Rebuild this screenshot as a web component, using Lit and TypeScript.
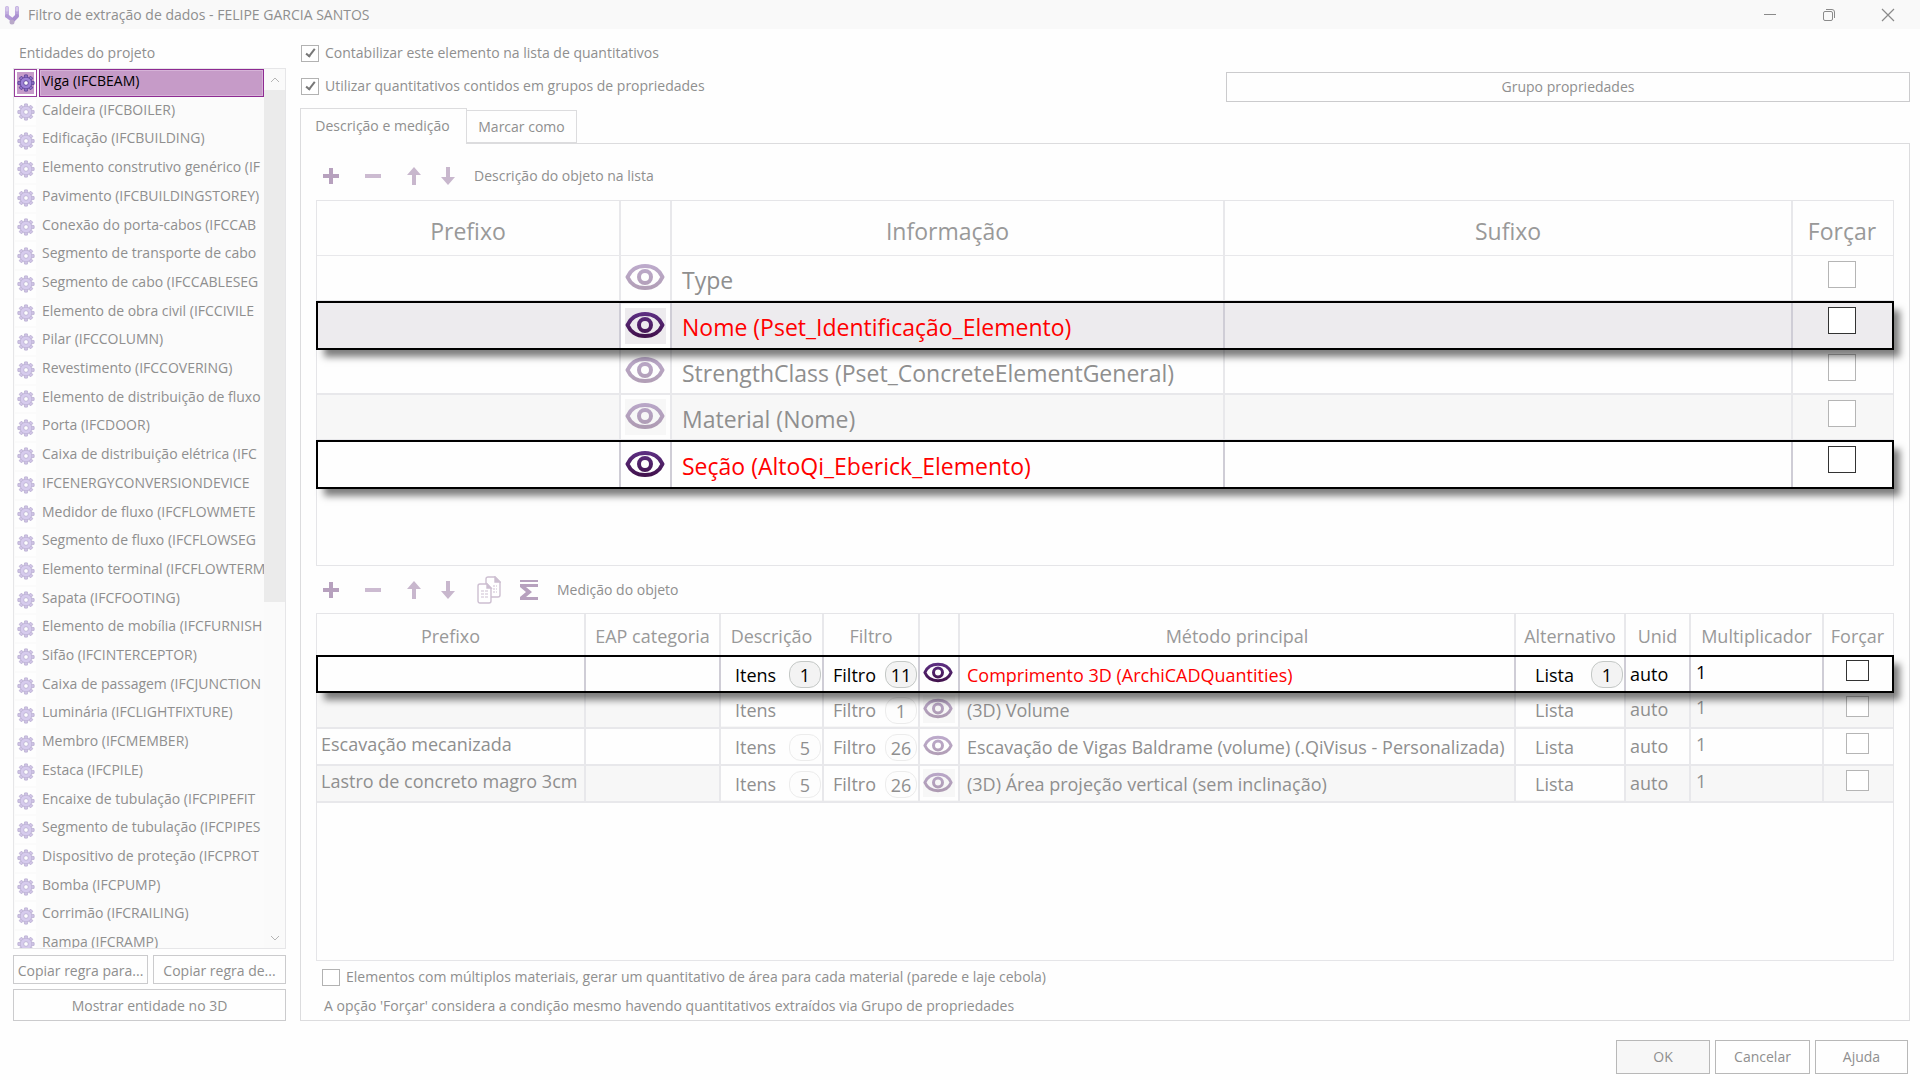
import { LitElement, html, svg, css, nothing } from "lit";
import { customElement, state } from "lit/decorators.js";
import { classMap } from "lit/directives/class-map.js";

const ENTITIES = [
  "Viga (IFCBEAM)",
  "Caldeira (IFCBOILER)",
  "Edificação (IFCBUILDING)",
  "Elemento construtivo genérico (IF",
  "Pavimento (IFCBUILDINGSTOREY)",
  "Conexão do porta-cabos (IFCCAB",
  "Segmento de transporte de cabo",
  "Segmento de cabo (IFCCABLESEG",
  "Elemento de obra civil (IFCCIVILE",
  "Pilar (IFCCOLUMN)",
  "Revestimento (IFCCOVERING)",
  "Elemento de distribuição de fluxo",
  "Porta (IFCDOOR)",
  "Caixa de distribuição elétrica (IFC",
  "IFCENERGYCONVERSIONDEVICE",
  "Medidor de fluxo (IFCFLOWMETE",
  "Segmento de fluxo (IFCFLOWSEG",
  "Elemento terminal (IFCFLOWTERM",
  "Sapata (IFCFOOTING)",
  "Elemento de mobília (IFCFURNISH",
  "Sifão (IFCINTERCEPTOR)",
  "Caixa de passagem (IFCJUNCTION",
  "Luminária (IFCLIGHTFIXTURE)",
  "Membro (IFCMEMBER)",
  "Estaca (IFCPILE)",
  "Encaixe de tubulação (IFCPIPEFIT",
  "Segmento de tubulação (IFCPIPES",
  "Dispositivo de proteção (IFCPROT",
  "Bomba (IFCPUMP)",
  "Corrimão (IFCRAILING)",
  "Rampa (IFCRAMP)",
];

interface DescriptionRow { info: string; marked?: boolean }
const DESCRIPTIONS: DescriptionRow[] = [
  { info: "Type" },
  { info: "Nome (Pset_Identificação_Elemento)", marked: true },
  { info: "StrengthClass (Pset_ConcreteElementGeneral)" },
  { info: "Material (Nome)" },
  { info: "Seção (AltoQi_Eberick_Elemento)", marked: true },
];

interface MeasureRow {
  prefix: string; items?: number; filters: number; method: string; alternatives?: number; marked?: boolean;
}
const MEASURES: MeasureRow[] = [
  { prefix: "", items: 1, filters: 11, method: "Comprimento 3D (ArchiCADQuantities)", alternatives: 1, marked: true },
  { prefix: "", filters: 1, method: "(3D) Volume" },
  { prefix: "Escavação mecanizada", items: 5, filters: 26, method: "Escavação de Vigas Baldrame (volume) (.QiVisus - Personalizada)" },
  { prefix: "Lastro de concreto magro 3cm", items: 5, filters: 26, method: "(3D) Área projeção vertical (sem inclinação)" },
];

const gear = html`<svg class="gear" viewBox="0 0 20 20" aria-hidden="true">
  ${[0, 45, 90, 135, 180, 225, 270, 315].map((a) => svg`<path transform="rotate(${a} 10 10)" d="M7.9 4.500 8.500 1h3l.6 3.500z" fill="#8f6fc6" stroke="#5f4598" stroke-width="1"/>`)}
  <circle cx="10" cy="10" r="6.400" fill="#9c80d6" stroke="#5f4598" stroke-width="0.800"/>
  <circle cx="10" cy="10" r="2.600" fill="#fff" stroke="#5f4598" stroke-width="1"/>
</svg>`;

const eye = html`<svg class="eye" viewBox="0 0 40 28" fill="none" stroke="url(#g)" aria-hidden="true">
  <defs><linearGradient id="g" gradientUnits="userSpaceOnUse" x1="0" y1="0" x2="0" y2="28"><stop offset="0" stop-color="#5f3186"/><stop offset="1" stop-color="#3f0f48"/></linearGradient></defs>
  <path stroke-width="4" stroke-linejoin="round" d="M20 3C29 3 35 8 37.500 14 35 20 29 25 20 25S5 20 2.500 14C5 8 11 3 20 3z"/>
  <circle cx="20" cy="14" r="6" stroke-width="4"/>
</svg>`;

const icons = {
  plus: html`<svg width="16" height="16" viewBox="0 0 16 16"><path d="M6 0h4v6h6v4h-6v6H6v-6H0V6h6z" fill="#b7a1be"/></svg>`,
  minus: html`<svg width="16" height="16" viewBox="0 0 16 16"><path d="M0 6h16v4H0z" fill="#ccbbd1"/></svg>`,
  up: html`<svg width="16" height="18" viewBox="0 0 16 18"><path d="M8 0l7 8h-5v10H6V8H1z" fill="#c8b7cd"/></svg>`,
  down: html`<svg width="16" height="18" viewBox="0 0 16 18"><path d="M8 18l7-8h-5V0H6v10H1z" fill="#c8b7cd"/></svg>`,
  copy: html`<svg width="24" height="28" viewBox="0 0 24 28" fill="#fff" stroke="#cdbfd1" stroke-width="1.400">
    <path d="M11 1h7l5 5v13a2 2 0 0 1-2 2H11a2 2 0 0 1-2-2V3a2 2 0 0 1 2-2z"/><path d="M18 1v5h5z" fill="#cdbfd1"/>
    <path d="M16 10h4M16 13h4M16 16h4" stroke-width="1" stroke-dasharray="2 1"/>
    <path d="M3 8h7l4 4v13a2 2 0 0 1-2 2H3a2 2 0 0 1-2-2V10a2 2 0 0 1 2-2z"/><path d="M10 8v4h4z" fill="#cdbfd1"/>
    <path d="M4 15h7M4 18h8M4 21h7" stroke-width="1" stroke-dasharray="3 1"/></svg>`,
  sum: html`<svg width="20" height="20" viewBox="0 0 20 20" fill="#b7a1be"><path d="M1 0h18v2H1zM1 4h18v3H7l6 5-6 5h12v3H1v-3l6-5-6-5z"/></svg>`,
};

@customElement("app-root")
export class AppRoot extends LitElement {
  @state() private selected = 0;

  static styles = css`
    :host {
      display: flex; flex-direction: column; min-height: 100vh; box-sizing: border-box;
      background: #fefefe; color: #8f8f8f;
      font-family: "Open Sans", "Noto Sans", sans-serif; font-size: 14px; line-height: 20px;
    }
    *, *::before, *::after { box-sizing: border-box; }
    button { font: inherit; color: inherit; padding: 0; margin: 0; background: none; border: 0; white-space: nowrap; }
    svg { display: block; flex: none; }
    h1, h2, p, ul { margin: 0; padding: 0; font: inherit; list-style: none; }
    .titlebar { display: flex; align-items: center; height: 29px; padding: 0 24px 0 4px; background: #f9f9f9; }
    .titlebar h1 { flex: 1; padding-left: 8px; }
    .window-actions { display: flex; gap: 43px; }
    .window-actions button { width: 16px; height: 16px; }
    .body { flex: 1; display: grid; grid-template-columns: 273px minmax(0, 1fr); column-gap: 14px; padding: 14px 10px 19px 13px; }
    .sidebar { display: flex; flex-direction: column; min-height: 0; }
    .sidebar h2 { padding-left: 6px; margin-bottom: 5px; }
    .listbox { flex: 1; min-height: 0; display: flex; border: 1px solid #e6e6e8; overflow: hidden; }
    .entities { flex: 1; min-width: 0; display: flex; flex-direction: column; margin-bottom: -11px; background: #fbfbfb; }
    .entities li { flex: 1 1 0; display: flex; }
    .entity { flex: 1; min-width: 0; display: flex; align-items: stretch; gap: 2px; text-align: left; }
    .entity .icon { width: 23px; display: grid; place-items: center; border: 1px solid #fbfbfb; background: #fefefe; }
    .entity .name { flex: 1; min-width: 0; overflow: hidden; padding: 1px 0 0 3px; line-height: 22px; }
    .gear { width: 18px; height: 18px; opacity: 0.4; }
    .entity.selected { padding-bottom: 1px; }
    .entity.selected .gear { opacity: 1; }
    .entity.selected .icon { border-color: #973d9b; background: #c69bca; box-shadow: inset 0 0 0 2px #fff; }
    .entity.selected .name { padding: 0 0 0 2px; border: 1px solid #8e2a92; box-shadow: inset 0 0 0 1px #d6b3d8; background: #c69bc8; color: #000; }
    .scrollbar { width: 21px; display: flex; flex-direction: column; background: #fafafa; }
    .scrollbar button { height: 21px; display: grid; place-items: center; }
    .scrollbar .thumb { flex: 512; background: #ebebeb; }
    .scrollbar .rest { flex: 325; }
    .push { border: 1px solid #cbcbcd; background: #fefefe; text-align: center; }
    .side-actions { display: grid; grid-template-columns: 135px minmax(0, 1fr); gap: 5px; padding-top: 6px; }
    .side-actions .push { height: 29px; padding-top: 2px; }
    .side-actions .push.wide { grid-column: 1 / -1; height: 32px; }
    .content { display: flex; flex-direction: column; min-width: 0; }
    .options { display: grid; grid-template-columns: minmax(0, 926fr) minmax(0, 684fr); align-items: end; }
    .checks { display: flex; flex-direction: column; gap: 13px; padding-left: 1px; }
    .check { display: flex; align-items: center; gap: 6px; }
    .options .push { height: 30px; margin-bottom: -6px; }
    input[type="checkbox"] { appearance: none; flex: none; width: 18px; height: 17px; margin: 0; border: 1px solid #b2b2b2; background: #fff; display: grid; place-items: center; }
    input[type="checkbox"]:checked::before { content: ""; width: 5px; height: 10px; border: solid #777; border-width: 0 2px 2px 0; transform: rotate(38deg); margin-bottom: 3px; }
    .tabs { display: flex; align-items: flex-end; padding-top: 12px; }
    .tab { height: 33px; width: 110px; border: 1px solid #dcdcde; border-left: 0; }
    .tab.active { height: 36px; width: 167px; padding: 0 2px 2px 0; border: 1px solid #dcdcde; border-bottom: 0; background: #fefefe; margin-bottom: -1px; position: relative; }
    .panel { flex: 1; display: flex; flex-direction: column; border: 1px solid #dcdcde; padding: 9px 15px 4px 15px; }
    .toolbar { display: flex; align-items: center; gap: 18px; height: 47px; padding: 0 0 2px 7px; }
    .toolbar.extended { padding: 2px 0 0 7px; }
    .toolbar button { display: flex; align-items: center; }
    .toolbar .spread { width: 23px; }
    .toolbar .spread:first-child { width: 24px; }
    .toolbar .copy { padding-left: 3px; }
    .frame { border: 1px solid #e5e5e8; }
    .frame.upper { flex: 365 1 0; }
    .frame.lower { flex: 347 1 0; }
    table { width: 100%; table-layout: fixed; border-collapse: separate; border-spacing: 0; }
    th, td { padding: 0; font-weight: 400; text-align: left; border: solid #e8e8eb; border-width: 0 2px 2px 0; white-space: nowrap; overflow: hidden; }
    th { text-align: center; color: #999; }
    th { border-bottom-width: 1px; }
    th:last-child, td:last-child { border-right: 0; padding-right: 2px; }
    tbody tr:nth-child(even) td { background: #f7f7f7; }
    tbody tr.marked { position: relative; z-index: 1; outline: 2px solid #000; outline-offset: -1px; box-shadow: 7px 8px 7px rgba(0, 0, 0, 0.5); }
    tbody tr.marked td { background: #fefefe; border-right-color: #cfcdd6; border-bottom-width: 0; color: #000; }
    tbody tr.marked:nth-child(even) td { background: #edebee; }
    tbody tr.marked td.red { color: #f00; }
    .eye-cell button { display: grid; place-items: center; width: 100%; height: 100%; border: 3px solid #fefefe; }
    .eye { opacity: 0.4; }
    .marked .eye { opacity: 1; }
    td.force { vertical-align: top; text-align: center; }
    td.force input { display: inline-block; vertical-align: top; border-color: #b5b5b5; }
    .marked td.force input { border-color: #333; }
    .large { font-size: 23px; line-height: 30px; }
    .large th { height: 55px; padding-top: 6px; }
    .large td { height: 46px; }
    .large tr.marked td { height: 47px; }
    .large td.text { padding: 3px 0 0 10px; }
    .large .eye { width: 40px; height: 28px; }
    .large td.force { padding-top: 5px; }
    .large td.force input { width: 28px; height: 27px; }
    .large .eye-cell button { height: 44px; border-width: 4px; padding: 0 3px 2px 0; }
    .medium { font-size: 18px; line-height: 24px; }
    .medium th { height: 42px; padding-top: 4px; }
    .medium td { height: 37px; }
    .medium tr.marked td { height: 36px; }
    .medium td.prefix { padding: 0 0 4px 4px; }
    .medium td.text { padding: 2px 0 0 7px; }
    .medium td.unit { padding-left: 4px; }
    .medium td.factor { padding: 0 0 4px 5px; }
    .medium .eye { width: 30px; height: 21px; }
    .medium td.force { padding-top: 4px; }
    .medium td.force input { width: 23px; height: 21px; }
    .medium .eye-cell button { height: 34px; padding: 0 2px 2px 0; }
    .picker { display: flex; align-items: center; justify-content: space-between; width: 100%; height: 34px; padding: 2px 1px 0 14px; background: #fefefe; }
    .picker.tight { padding-left: 9px; }
    .picker.inset { padding-left: 19px; }
    .badge { min-width: 32px; height: 27px; border: 1px solid #ececec; border-radius: 12px; background: #fdfdfd; line-height: 27px; text-align: center; }
    .marked .badge { border-color: #c4c8c6; background: #f3f3f3; }
    .panel .check { padding: 6px 0 6px 6px; }
    .note { padding: 3px 0 0 8px; }
    .footer { display: grid; grid-template-columns: 94px 95px 93px; gap: 5px; justify-content: end; padding: 0 12px 6px 0; }
    .footer .push { height: 34px; border-color: #b8b8b8; }
    .footer .push.default { background: #f7f7f7; }
  `;

  private toolbar(label: string, extended: boolean) {
    return html`<div class=${classMap({ toolbar: true, extended })}>
      <button class="spread" aria-label="Adicionar">${icons.plus}</button>
      <button class="spread" aria-label="Remover">${icons.minus}</button>
      <button aria-label="Mover para cima">${icons.up}</button>
      <button aria-label="Mover para baixo">${icons.down}</button>
      ${extended ? html`<button class="copy" aria-label="Copiar">${icons.copy}</button><button aria-label="Somatório">${icons.sum}</button>` : nothing}
      <span>${label}</span>
    </div>`;
  }

  private picker(label: string, count?: number, variant = "") {
    return html`<button class=${classMap({ picker: true, inset: variant === "inset", tight: variant === "tight" })}><span>${label}</span>${count ? html`<span class="badge">${count}</span>` : nothing}</button>`;
  }

  private eyeCell() {
    return html`<td class="eye-cell"><button aria-label="Visualizar">${eye}</button></td>`;
  }

  private descriptionTable() {
    return html`<table class="large">
      <colgroup><col style="width:304px" /><col style="width:51px" /><col style="width:553px" /><col /><col style="width:100px" /></colgroup>
      <thead><tr><th>Prefixo</th><th></th><th>Informação</th><th>Sufixo</th><th>Forçar</th></tr></thead>
      <tbody>${DESCRIPTIONS.map((row) => html`<tr class=${classMap({ marked: !!row.marked })}>
        <td></td>${this.eyeCell()}<td class="text red">${row.info}</td><td></td>
        <td class="force"><input type="checkbox" aria-label="Forçar ${row.info}" /></td>
      </tr>`)}</tbody>
    </table>`;
  }

  private measureTable() {
    return html`<table class="medium">
      <colgroup><col style="width:269px" /><col style="width:135px" /><col style="width:103px" /><col style="width:96px" /><col style="width:40px" /><col /><col style="width:110px" /><col style="width:65px" /><col style="width:133px" /><col style="width:69px" /></colgroup>
      <thead><tr><th>Prefixo</th><th>EAP categoria</th><th>Descrição</th><th>Filtro</th><th></th><th>Método principal</th><th>Alternativo</th><th>Unid</th><th>Multiplicador</th><th>Forçar</th></tr></thead>
      <tbody>${MEASURES.map((row) => html`<tr class=${classMap({ marked: !!row.marked })}>
        <td class="prefix">${row.prefix}</td><td></td>
        <td>${this.picker("Itens", row.items)}</td>
        <td>${this.picker("Filtro", row.filters, "tight")}</td>
        ${this.eyeCell()}
        <td class="text red">${row.method}</td>
        <td>${this.picker("Lista", row.alternatives, "inset")}</td>
        <td class="unit">auto</td><td class="factor">1</td>
        <td class="force"><input type="checkbox" aria-label="Forçar ${row.method}" /></td>
      </tr>`)}</tbody>
    </table>`;
  }

  render() {
    return html`
      <header class="titlebar">
        <svg width="16" height="20" viewBox="0 0 16 20" stroke-linecap="round" fill="none">
          <path d="M3 3v8" stroke="#c3afe0" stroke-width="4"/><path d="M3 11l4 3" stroke="#b299d6" stroke-width="4"/>
          <path d="M13 3v7" stroke="#b8a2da" stroke-width="4"/><path d="M13 11l-4 4" stroke="#a98fd0" stroke-width="4"/>
          <path d="M3 3v2M13 3v2" stroke="#d5c7ea" stroke-width="3"/><circle cx="8" cy="17" r="2.500" fill="#b9a9c9"/>
        </svg>
        <h1>Filtro de extração de dados - FELIPE GARCIA SANTOS</h1>
        <div class="window-actions">
          <button aria-label="Minimizar"><svg width="16" height="16" fill="none" stroke="#8a8a8a"><path d="M2 7.500h12"/></svg></button>
          <button aria-label="Restaurar"><svg width="16" height="16" fill="none" stroke="#8a8a8a"><rect x="2.500" y="4.500" width="9" height="9" rx="1.500"/><path d="M5 2.500h6a2.500 2.500 0 0 1 2.500 2.500v6"/></svg></button>
          <button aria-label="Fechar"><svg width="16" height="16" fill="none" stroke="#8a8a8a" stroke-width="1.200"><path d="M2 2l12 12M14 2L2 14"/></svg></button>
        </div>
      </header>
      <div class="body">
        <aside class="sidebar">
          <h2>Entidades do projeto</h2>
          <div class="listbox">
            <ul class="entities">${ENTITIES.map((name, i) => html`<li>
              <button class=${classMap({ entity: true, selected: i === this.selected })} @click=${() => (this.selected = i)}>
                <span class="icon">${gear}</span><span class="name">${name}</span>
              </button></li>`)}</ul>
            <div class="scrollbar">
              <button aria-label="Rolar para cima"><svg width="10" height="6" fill="none" stroke="#b5b5b5"><path d="M1 5l4-4 4 4"/></svg></button>
              <div class="thumb"></div><div class="rest"></div>
              <button aria-label="Rolar para baixo"><svg width="10" height="6" fill="none" stroke="#b5b5b5"><path d="M1 1l4 4 4-4"/></svg></button>
            </div>
          </div>
          <div class="side-actions">
            <button class="push">Copiar regra para...</button><button class="push">Copiar regra de...</button>
            <button class="push wide">Mostrar entidade no 3D</button>
          </div>
        </aside>
        <main class="content">
          <div class="options">
            <div class="checks">
              <label class="check"><input type="checkbox" checked />Contabilizar este elemento na lista de quantitativos</label>
              <label class="check"><input type="checkbox" checked />Utilizar quantitativos contidos em grupos de propriedades</label>
            </div>
            <button class="push">Grupo propriedades</button>
          </div>
          <div class="tabs" role="tablist">
            <button class="tab active" role="tab" aria-selected="true">Descrição e medição</button>
            <button class="tab" role="tab" aria-selected="false">Marcar como</button>
          </div>
          <section class="panel">
            ${this.toolbar("Descrição do objeto na lista", false)}
            <div class="frame upper">${this.descriptionTable()}</div>
            ${this.toolbar("Medição do objeto", true)}
            <div class="frame lower">${this.measureTable()}</div>
            <label class="check"><input type="checkbox" />Elementos com múltiplos materiais, gerar um quantitativo de área para cada material (parede e laje cebola)</label>
            <p class="note">A opção 'Forçar' considera a condição mesmo havendo quantitativos extraídos via Grupo de propriedades</p>
          </section>
        </main>
      </div>
      <footer class="footer">
        <button class="push default">OK</button><button class="push">Cancelar</button><button class="push">Ajuda</button>
      </footer>
    `;
  }
}
